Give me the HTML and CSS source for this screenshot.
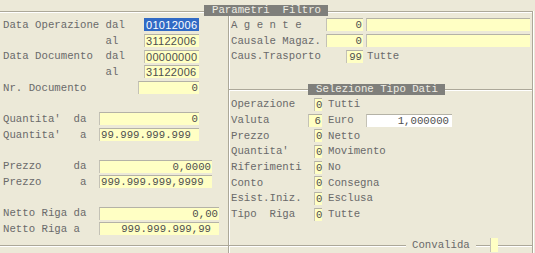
FILE: index.html
```html
<!DOCTYPE html>
<html lang="it">
<head>
    <meta charset="UTF-8">
    <title>Parametri Filtro</title>
    <link rel="stylesheet" href="styles.css">
</head>
<body>
    <div class="frame">
        <span class="tab tab-main">Parametri  Filtro</span>

        <!-- colonna sinistra: date e importi -->
        <div class="left">
            <div class="row"><span class="key"><span class="lbl">Data Operazione dal</span><span class="fld date sel">01012006</span></span></div>
            <div class="row"><span class="key"><span class="lbl">                al</span><span class="fld date">31122006</span></span></div>
            <div class="row"><span class="key"><span class="lbl">Data Documento  dal</span><span class="fld date">00000000</span></span></div>
            <div class="row"><span class="key"><span class="lbl">                al</span><span class="fld date">31122006</span></span></div>
            <div class="row"><span class="key"><span class="lbl">Nr. Documento</span><span class="fld num w61">0</span></span></div>
            <div class="row"></div>
            <div class="row"><span class="key"><span class="lbl">Quantita'  da</span><span class="fld num w100">0</span></span></div>
            <div class="row"><span class="key"><span class="lbl">Quantita'   a</span><span class="fld w100">99.999.999.999</span></span></div>
            <div class="row"></div>
            <div class="row"><span class="key wide"><span class="lbl">Prezzo     da</span><span class="fld num w113">0,0000</span></span></div>
            <div class="row"><span class="key wide"><span class="lbl">Prezzo      a</span><span class="fld w113">999.999.999,9999</span></span></div>
            <div class="row"></div>
            <div class="row"><span class="key wider"><span class="lbl">Netto Riga da</span><span class="fld num w120">0,00</span></span></div>
            <div class="row"><span class="key wider"><span class="lbl">Netto Riga a</span><span class="fld num pad w120">999.999.999,99</span></span></div>
        </div>

        <!-- colonna destra -->
        <div class="right">
            <div class="agents">
                <div class="row"><span class="key agent"><span class="lbl">A g e n t e</span><span class="fld num w37">0</span></span><span class="fld long"></span></div>
                <div class="row"><span class="key agent"><span class="lbl">Causale Magaz.</span><span class="fld num w37">0</span></span><span class="fld long"></span></div>
                <div class="row"><span class="key agent"><span class="lbl">Caus.Trasporto</span><span class="fld num w17">99</span></span><span class="txt near">Tutte</span></div>
            </div>

            <div class="types">
                <span class="tab tab-types">Selezione Tipo Dati</span>
                <div class="row"><span class="key type"><span class="lbl">Operazione</span><span class="fld num w8">0</span></span><span class="txt">Tutti</span></div>
                <div class="row"><span class="key type"><span class="lbl">Valuta</span><span class="fld num w14">6</span></span><span class="txt cur">Euro</span><span class="fld num white">1,000000</span></div>
                <div class="row"><span class="key type"><span class="lbl">Prezzo</span><span class="fld num w8">0</span></span><span class="txt">Netto</span></div>
                <div class="row"><span class="key type"><span class="lbl">Quantita'</span><span class="fld num w8">0</span></span><span class="txt">Movimento</span></div>
                <div class="row"><span class="key type"><span class="lbl">Riferimenti</span><span class="fld num w8">0</span></span><span class="txt">No</span></div>
                <div class="row"><span class="key type"><span class="lbl">Conto</span><span class="fld num w8">0</span></span><span class="txt">Consegna</span></div>
                <div class="row"><span class="key type"><span class="lbl">Esist.Iniz.</span><span class="fld num w8">0</span></span><span class="txt">Esclusa</span></div>
                <div class="row"><span class="key type"><span class="lbl">Tipo  Riga</span><span class="fld num w8">0</span></span><span class="txt">Tutte</span></div>

                <span class="confirm">Convalida</span>
                <span class="confirm-box"></span>
            </div>
        </div>
    </div>
</body>
</html>
```

FILE: styles.css
```css
body {
    margin: 0;
    width: 535px;
    height: 253px;
    overflow: hidden;
    background: #ece9d8;
    font-family: "Liberation Mono", "DejaVu Sans Mono", monospace;
    font-size: 10.7px;
    color: #6a6a6a;
}

.frame {
    position: relative;
    display: flex;
    margin: 11px 2px 0 0;
    height: 250px;
    border-top: 1px solid #aca899;
    border-right: 1px solid #aca899;
    box-shadow: inset 0 1px #fff, 1px 0 #fff;
}

.tab {
    position: absolute;
    top: -7px;
    height: 11px;
    line-height: 11px;
    padding-left: 8px;
    box-sizing: border-box;
    background: #7f7f7b;
    color: #eeede4;
    white-space: pre;
    z-index: 2;
}

.tab-main {
    left: 204px;
    width: 124px;
}

.tab-types {
    left: 79px;
    width: 137px;
}

.left {
    width: 228px;
    height: 234px;
    box-sizing: border-box;
    padding: 5px 0 0 3px;
    border-bottom: 1px solid #aca899;
    box-shadow: 0 1px #fff;
}

.right {
    flex: 1;
    border-left: 1px solid #aca899;
    box-shadow: inset 1px 0 #fff;
}

.agents {
    height: 78px;
    box-sizing: border-box;
    padding: 5px 0 0 2px;
    border-bottom: 1px solid #aca899;
}

.types {
    position: relative;
    height: 156px;
    box-sizing: border-box;
    padding: 5.5px 0 0 2px;
    border-top: 1px solid #fff;
    border-bottom: 1px solid #aca899;
    box-shadow: 0 1px #fff;
}

.row {
    display: flex;
    align-items: center;
    height: 15.7px;
}

.key {
    display: flex;
    align-items: center;
    width: 196px;
}

.key.wide { width: 209px; }
.key.wider { width: 216px; }
.key.agent { width: 132px; }
.key.type { width: 91px; }

.lbl {
    flex: 1;
    white-space: pre;
}

.fld {
    height: 13px;
    line-height: 12px;
    box-sizing: border-box;
    padding: 0 1px;
    background: #ffffc4;
    border-top: 1px solid #b4b2a6;
    border-left: 1px solid #c4c2b6;
    color: #4e4e4e;
    white-space: pre;
}

.fld.num {
    text-align: right;
    padding-right: 1px;
}

.fld.pad { padding-right: 8px; }

.fld.date {
    width: 55px;
    padding-left: 1px;
    font-family: "Liberation Sans", Arial, sans-serif;
    font-size: 11px;
    letter-spacing: 0.3px;
}

.fld.sel {
    background: #316ac5;
    color: #fff;
    border-color: #316ac5;
}

.w8 { width: 8px; }
.w14 { width: 14px; }
.w17 { width: 17px; }
.w37 { width: 37px; }
.w61 { width: 61px; }
.w100 { width: 100px; }
.w113 { width: 113px; }
.w120 { width: 120px; }

.fld.long {
    width: 164px;
    margin-left: 3px;
}

.fld.white {
    width: 86px;
    background: #fff;
    padding-right: 3px;
}

.txt {
    margin-left: 6px;
    white-space: pre;
}

.txt.near { margin-left: 4px; }
.txt.cur { width: 38px; }

.confirm {
    position: absolute;
    left: 177px;
    top: 148px;
    padding: 0 6px;
    line-height: 13px;
    background: #ece9d8;
}

.confirm-box {
    position: absolute;
    left: 261px;
    top: 147px;
    width: 8px;
    height: 14px;
    box-sizing: border-box;
    background: #ffffc4;
    border-left: 1px solid #c4c2b6;
}
```
